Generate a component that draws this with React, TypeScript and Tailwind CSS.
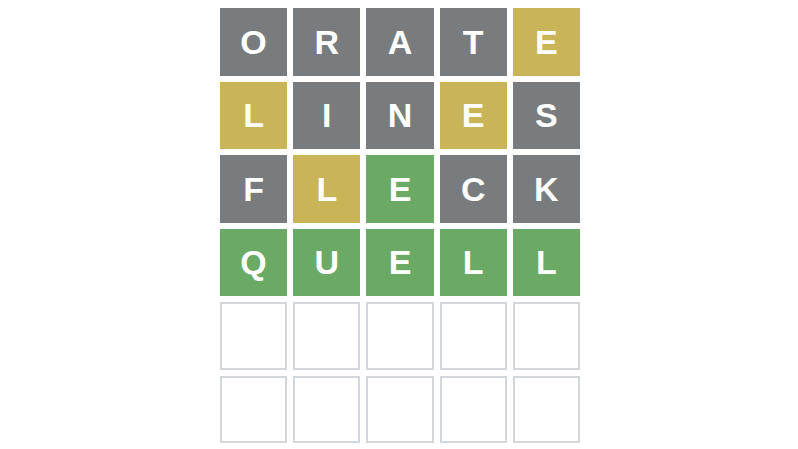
const rows: Array<Array<[string, 'gray' | 'yellow' | 'green']>> = [
  [['O', 'gray'], ['R', 'gray'], ['A', 'gray'], ['T', 'gray'], ['E', 'yellow']],
  [['L', 'yellow'], ['I', 'gray'], ['N', 'gray'], ['E', 'yellow'], ['S', 'gray']],
  [['F', 'gray'], ['L', 'yellow'], ['E', 'green'], ['C', 'gray'], ['K', 'gray']],
  [['Q', 'green'], ['U', 'green'], ['E', 'green'], ['L', 'green'], ['L', 'green']],
];

const colorClass = {
  gray: 'bg-[#787c7e]',
  yellow: 'bg-[#c9b458]',
  green: 'bg-[#6aaa64]',
};

export default function App() {
  return (
    <div className="w-[798px] h-[449px] bg-white flex items-center justify-center font-['Liberation_Sans',Arial,sans-serif]">
      <div className="grid grid-cols-5 grid-rows-6 gap-[6px] w-[360px] h-[435px] mt-[2px] ml-[2px]">
        {rows.flatMap((row, r) =>
          row.map(([letter, color], c) => (
            <div
              key={`${r}-${c}`}
              className={`${colorClass[color]} flex items-center justify-center text-white font-bold text-[34px] leading-none`}
            >
              {letter}
            </div>
          ))
        )}
        {Array.from({ length: 10 }).map((_, i) => (
          <div key={`e-${i}`} className="border-2 border-[#d3d6da] bg-white" />
        ))}
      </div>
    </div>
  );
}
